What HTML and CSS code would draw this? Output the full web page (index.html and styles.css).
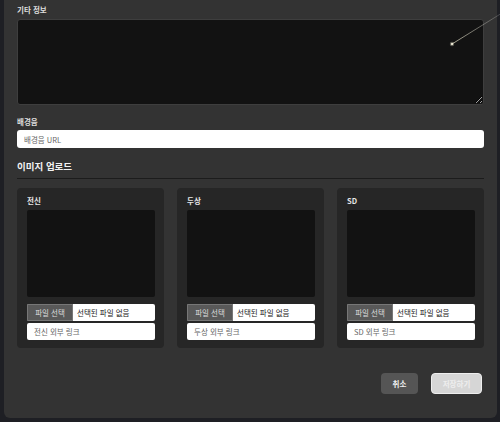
FILE: index.html
```html
<!DOCTYPE html>
<html lang="ko">
  <head>
    <meta charset="UTF-8" />
    <meta name="viewport" content="width=device-width, initial-scale=1.0" />
    <title>캐릭터 편집</title>
    <link rel="stylesheet" href="styles.css">
  </head>
  <body>
    <div class="modal">
      <label class="field-label">기타 정보</label>
      <textarea class="memo"></textarea>

      <label class="field-label bgm-label">배경음</label>
      <input class="text-input" type="text" placeholder="배경음 URL" />

      <p class="section-title">이미지 업로드</p>

      <div class="cards">
        <div class="card">
          <p class="card-title">전신</p>
          <div class="preview"></div>
          <div class="file-row">
            <span class="file-btn">파일 선택</span>
            <span class="file-name">선택된 파일 없음</span>
          </div>
          <input class="link-input" type="text" placeholder="전신 외부 링크" />
        </div>
        <div class="card">
          <p class="card-title">두상</p>
          <div class="preview"></div>
          <div class="file-row">
            <span class="file-btn">파일 선택</span>
            <span class="file-name">선택된 파일 없음</span>
          </div>
          <input class="link-input" type="text" placeholder="두상 외부 링크" />
        </div>
        <div class="card">
          <p class="card-title">SD</p>
          <div class="preview"></div>
          <div class="file-row">
            <span class="file-btn">파일 선택</span>
            <span class="file-name">선택된 파일 없음</span>
          </div>
          <input class="link-input" type="text" placeholder="SD 외부 링크" />
        </div>
      </div>

      <div class="actions">
        <button class="btn cancel">취소</button>
        <button class="btn save" disabled>저장하기</button>
      </div>
    </div>

    <!-- shooting star over the memo box -->
    <svg class="streak" width="60" height="40" viewBox="0 0 60 40">
      <defs>
        <linearGradient id="tail" x1="0" y1="1" x2="1" y2="0">
          <stop offset="0" stop-color="#e8e4c8" stop-opacity="0.9" />
          <stop offset="1" stop-color="#bbb" stop-opacity="0.3" />
        </linearGradient>
      </defs>
      <line x1="8" y1="33" x2="58" y2="2" stroke="url(#tail)" stroke-width="0.8" />
      <circle cx="8" cy="33" r="2.2" fill="#f2efd6" opacity="0.35" />
      <circle cx="8" cy="33" r="1.1" fill="#fffbe6" />
    </svg>
  </body>
</html>
```

FILE: styles.css
```css
body {
  margin: 0;
  background-color: #1e1f24;
  font-family: "Noto Sans CJK KR", "Noto Sans", sans-serif;
  height: 422px;
  overflow: hidden;
  position: relative;
}

.modal {
  margin-left: 4px;
  width: 493px;
  height: 418px;
  box-sizing: border-box;
  padding: 4px 13px 0 13px;
  background-color: #333333;
  border-radius: 0 0 6px 6px;
  display: flex;
  flex-direction: column;
}

.field-label {
  font-size: 7.5px;
  font-weight: bold;
  color: #dddddd;
  line-height: 11px;
  margin-bottom: 4px;
}

.memo {
  display: block;
  height: 86px;
  box-sizing: border-box;
  margin: 0;
  background-color: #121212;
  border: 1px solid #3e3e3e;
  border-radius: 3px;
  resize: vertical;
  color-scheme: dark;
}

.bgm-label {
  margin-top: 11px;
  margin-bottom: 3px;
}

.text-input {
  height: 18px;
  box-sizing: border-box;
  border: none;
  border-radius: 3px;
  padding: 0 7px;
  font-family: inherit;
  font-size: 7.5px;
  background-color: #ffffff;
}

.text-input::placeholder,
.link-input::placeholder {
  color: #666666;
}

.section-title {
  margin: 11px 0 0 0;
  font-size: 9.5px;
  font-weight: bold;
  color: #f2f2f2;
  line-height: 14px;
  padding-bottom: 5px;
  border-bottom: 1px solid #1c1c1c;
}

.cards {
  display: flex;
  gap: 13px;
  margin-top: 9px;
}

.card {
  flex: 1;
  background-color: #262626;
  border-radius: 4px;
  padding: 8px 9px 8px 10px;
  display: flex;
  flex-direction: column;
}

.card-title {
  margin: 0;
  font-size: 7.5px;
  font-weight: bold;
  color: #e6e6e6;
  line-height: 10px;
  margin-bottom: 4px;
}

.preview {
  height: 87px;
  background-color: #121212;
  border-radius: 2px;
}

.file-row {
  margin-top: 7px;
  height: 17px;
  display: flex;
  background-color: #ffffff;
  border-radius: 2px;
  overflow: hidden;
  font-size: 7.5px;
  line-height: 17px;
}

.file-btn {
  width: 46px;
  box-sizing: border-box;
  text-align: center;
  background-color: #595959;
  color: #dddddd;
  border: 1px solid #777777;
  line-height: 15px;
}

.file-name {
  padding-left: 4px;
  color: #222222;
}

.link-input {
  margin-top: 2px;
  height: 17px;
  box-sizing: border-box;
  border: none;
  border-radius: 2px;
  padding: 0 7px;
  font-family: inherit;
  font-size: 7.5px;
  background-color: #ffffff;
}

.actions {
  display: flex;
  justify-content: flex-end;
  gap: 13px;
  margin-top: 25px;
  padding-right: 2px;
}

.btn {
  height: 21px;
  border: none;
  border-radius: 4px;
  font-family: inherit;
  font-size: 7.5px;
  font-weight: bold;
  padding: 0;
}

.cancel {
  width: 37px;
  background-color: #555555;
  color: #eeeeee;
}

.save {
  width: 51px;
  background-color: #d6d6d6;
  color: #eeeeee;
  border: 1px solid #eeeeee;
}

.streak {
  position: absolute;
  left: 444px;
  top: 11px;
}
```
